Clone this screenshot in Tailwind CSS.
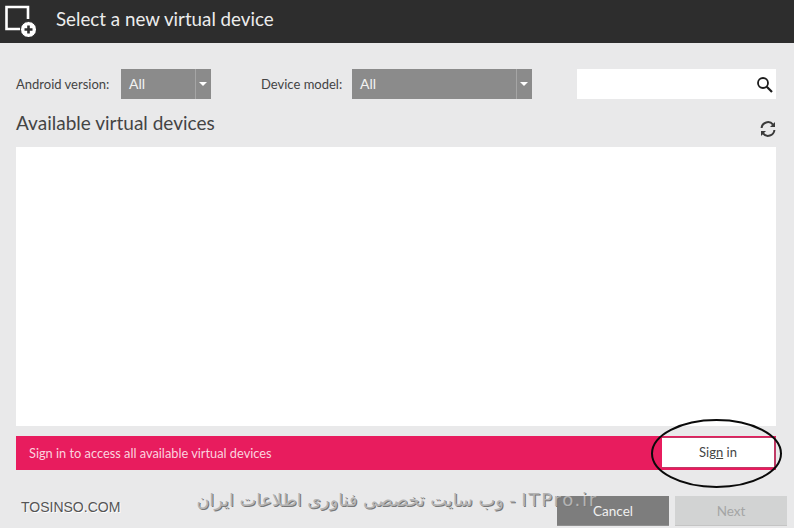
<!DOCTYPE html>
<html lang="en">
<head>
<meta charset="utf-8">
<script src="https://cdn.jsdelivr.net/npm/@tailwindcss/browser@4"></script>
</head>
<body class="font-['Lato',sans-serif]">
<div class="relative w-[794px] h-[528px] overflow-hidden bg-[#e9e9ea] flex flex-col">
  <header class="h-[43px] bg-[#2d2d2d] flex items-center shrink-0">
    <svg class="ml-[5px] mt-[-1px] w-[31px] h-[32px]" viewBox="0 0 31 32" fill="none">
      <path d="M15 24H1.5V2H23V14" stroke="#fff" stroke-width="2.6"/>
      <circle cx="23.5" cy="24.5" r="8" fill="#fff" stroke="#2d2d2d" stroke-width="1"/>
      <path d="M19.5 24.5h8M23.5 20.5v8" stroke="#2d2d2d" stroke-width="2.6"/>
    </svg>
    <h1 class="ml-[20px] text-[18.75px] leading-none text-[#ececec] mt-[-4px]">Select a new virtual device</h1>
  </header>

  <div class="pl-4 pr-[18px] flex flex-col flex-1">
    <div class="mt-[26px] h-[30px] flex items-center text-[13px] text-[#444]">
      <span class="w-[105px] pt-[1px]">Android version:</span>
      <div class="w-[90px] h-[30px] bg-[#8b8b8b] flex text-[#f2f2f2] text-[14px]">
        <span class="flex-1 pl-2 leading-[30px]">All</span>
        <span class="w-4 border-l border-[#a5a5a5] flex items-center justify-center pr-[1px]">
          <span class="w-0 h-0 border-x-[4px] border-x-transparent border-t-[4px] border-t-white"></span>
        </span>
      </div>
      <span class="ml-[50px] w-[91px] pt-[1px]">Device model:</span>
      <div class="w-[180px] h-[30px] bg-[#8b8b8b] flex text-[#f2f2f2] text-[14px]">
        <span class="flex-1 pl-2 leading-[30px]">All</span>
        <span class="w-4 border-l border-[#a5a5a5] flex items-center justify-center pr-[1px]">
          <span class="w-0 h-0 border-x-[4px] border-x-transparent border-t-[4px] border-t-white"></span>
        </span>
      </div>
      <div class="ml-[45px] w-[199px] h-[30px] bg-white flex items-center justify-end pr-[3px]">
        <svg class="w-[17px] h-[17px]" viewBox="0 0 17 17" fill="none" stroke="#1c1c1c">
          <circle cx="7" cy="7" r="5" stroke-width="1.8"/>
          <path d="M10.8 10.8L16 16" stroke-width="2.2"/>
        </svg>
      </div>
    </div>

    <div class="mt-[10px] h-[38px] flex justify-between">
      <h2 class="text-[19px] leading-[28px] text-[#444]">Available virtual devices</h2>
      <svg class="mt-[12px] w-[16px] h-[16px]" viewBox="0 0 16 16" fill="none" stroke="#3a3a3a" stroke-width="2">
        <path d="M1.6 7A6.4 6.4 0 0 1 13 3.6"/>
        <path d="M14.4 9A6.4 6.4 0 0 1 3 12.4"/>
        <path d="M15 1v5h-5z" fill="#3a3a3a" stroke="none"/>
        <path d="M1 15v-5h5z" fill="#3a3a3a" stroke="none"/>
      </svg>
    </div>

    <div class="h-[279px] bg-white"></div>

    <div class="mt-[10px] h-[34px] bg-[#e81c5e] flex items-center justify-between">
      <span class="pl-[13px] pt-[1px] text-[12.8px] text-[#fbd3df]">Sign in to access all available virtual devices</span>
      <button class="w-[114px] h-[31px] mt-[-2px] pt-[2px] bg-white text-[13px] text-[#444] border-y border-r-2 border-[#c03a66]">Sig<span class="underline">n</span> in</button>
    </div>

    <div class="mt-[26px] flex justify-end gap-[6px] mr-[-11px]">
      <button class="w-[112px] h-[30px] pt-[1px] bg-[#7d7d7d] border-b border-[#8f8f8f] text-[13.5px] text-[#f0f0f0]">Cancel</button>
      <button class="w-[112px] h-[30px] pt-[1px] bg-[#d2d3d3] border-b border-[#c4c4c4] text-[13.5px] text-[#a4a5a5]">Next</button>
    </div>
  </div>

  <svg class="absolute left-[651px] top-[419px] w-[131px] h-[69px]" viewBox="0 0 131 69" fill="none">
    <ellipse cx="65.5" cy="34.5" rx="64.5" ry="33.5" stroke="#0a0a0a" stroke-width="2"/>
  </svg>
  <span class="absolute left-[21px] top-[499px] font-['Liberation_Sans',sans-serif] text-[14px] leading-[16px] text-[#555] [text-shadow:1px_1px_0_#fff]">TOSINSO.COM</span>
  <span dir="rtl" class="absolute right-[196px] top-[488px] whitespace-nowrap font-['DejaVu_Sans',sans-serif] text-[17.7px] leading-[24px] text-[#b4b4b4] [text-shadow:1px_1px_0_#777]"><span class="text-[18px] tracking-[1.75px]">ITPro.ir</span> - وب سایت تخصصی فناوری اطلاعات ایران</span>
</div>
</body>
</html>
